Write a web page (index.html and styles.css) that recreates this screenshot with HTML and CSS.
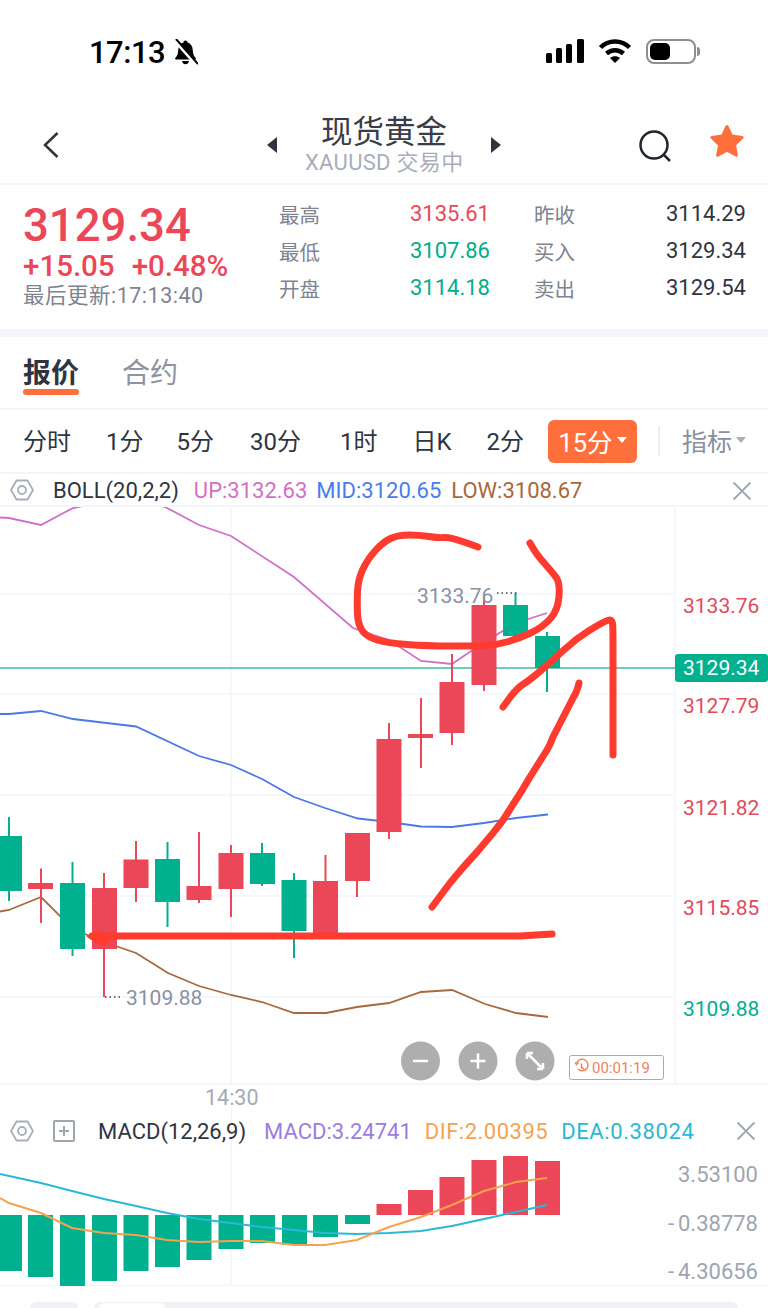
FILE: index.html
```html
<!DOCTYPE html>
<html lang="zh-CN">
<head>
    <meta charset="UTF-8">
    <meta name="viewport" content="width=device-width, initial-scale=1.0">
    <title>现货黄金</title>
    <link rel="stylesheet" href="styles.css">
</head>
<body>
    <div class="app">
        <!-- status bar -->
        <div class="status-bar">
            <div class="status-left">
                <span class="clock">17:13</span>
                <svg class="bell" viewBox="0 0 25 26">
                    <path class="ink" d="M12.5 1.5c1.2 0 2 .8 2 1.9 3.4 1 5 3.7 5.2 7.4.2 3.6.8 6 3 8.2.5.6.2 1.5-.7 1.5H3c-.9 0-1.200-.9-.7-1.500 2.200-2.200 2.800-4.600 3-8.200.2-3.700 1.800-6.400 5.200-7.400 0-1.100.8-1.900 2-1.900z"/>
                    <path class="ink" d="M9 22h7c-.3 2-1.700 3.300-3.500 3.300S9.300 24 9 22z"/>
                    <path class="bell-gap" d="M1 0l23 26"/>
                    <path class="bell-slash" d="M3 0l22 25"/>
                </svg>
            </div>
            <div class="status-right">
                <svg class="signal" viewBox="0 0 38 24">
                    <rect class="ink" x="0" y="14" width="6" height="10" rx="1.500"/>
                    <rect class="ink" x="10" y="9" width="6" height="15" rx="1.500"/>
                    <rect class="ink" x="20" y="5" width="6" height="19" rx="1.500"/>
                    <rect class="ink" x="31" y="0" width="7" height="24" rx="1.500"/>
                </svg>
                <svg class="wifi" viewBox="0 0 34 24">
                    <path class="wifi-arc" d="M2.500 8.500C10.500 .5 23.500 .5 31.500 8.500"/>
                    <path class="wifi-arc" d="M8.500 14.500C13.500 10 20.500 10 25.500 14.500"/>
                    <path class="ink" d="M12 19l5 5 5-5c-2.800-2.400-7.200-2.400-10 0z"/>
                </svg>
                <div class="battery"><div class="battery-level"></div></div>
                <div class="battery-nub"></div>
            </div>
        </div>

        <!-- nav -->
        <div class="nav">
            <svg class="back" viewBox="0 0 16 26"><path d="M14.500 1L2 13l12.500 12"/></svg>
            <div class="nav-center">
                <span class="tri tri-left"></span>
                <div class="nav-title">
                    <div class="name">现货黄金</div>
                    <div class="sub">XAUUSD 交易中</div>
                </div>
                <span class="tri tri-right"></span>
            </div>
            <svg class="search" viewBox="0 0 32 32"><circle cx="15" cy="15" r="13.500"/><path d="M24.500 24.500L31 31"/></svg>
            <svg class="star" viewBox="0 0 36 35"><path d="M18 2.500l4.600 9.600 10.500 1.400-7.700 7.300 2 10.500L18 26.300 8.600 31.300l2-10.500-7.700-7.300 10.500-1.400z"/></svg>
        </div>

        <!-- quote -->
        <div class="quote">
            <div class="quote-main">
                <div class="last">3129.34</div>
                <div class="change"><span>+15.05</span><span>+0.48%</span></div>
                <div class="updated">最后更新:17:13:40</div>
            </div>
            <div class="stats">
                <span class="stat-label">最高</span><span class="stat-val red">3135.61</span>
                <span class="stat-label second">昨收</span><span class="stat-val">3114.29</span>
                <span class="stat-label">最低</span><span class="stat-val green">3107.86</span>
                <span class="stat-label second">买入</span><span class="stat-val">3129.34</span>
                <span class="stat-label">开盘</span><span class="stat-val green">3114.18</span>
                <span class="stat-label second">卖出</span><span class="stat-val">3129.54</span>
            </div>
        </div>
        <div class="band"></div>

        <!-- tabs -->
        <div class="tabs">
            <div class="tab active">报价</div>
            <div class="tab">合约</div>
        </div>

        <!-- periods -->
        <div class="periods">
            <span class="period p1">分时</span>
            <span class="period p2">1分</span>
            <span class="period p3">5分</span>
            <span class="period p4">30分</span>
            <span class="period p5">1时</span>
            <span class="period p6">日K</span>
            <span class="period p7">2分</span>
            <span class="period-active">15分<i class="caret caret-white"></i></span>
            <span class="divider"></span>
            <span class="indicator">指标<i class="caret caret-grey"></i></span>
        </div>

        <!-- boll header -->
        <div class="ind-head boll-head">
            <svg class="hex" viewBox="0 0 24 22"><path d="M6.500 1.500h11L23 11l-5.500 9.500h-11L1 11z"/><circle cx="12" cy="11" r="4"/></svg>
            <span class="ind-name boll-name">BOLL(20,2,2)</span>
            <span class="c-up">UP:3132.63</span>
            <span class="c-mid">MID:3120.65</span>
            <span class="c-low">LOW:3108.67</span>
            <svg class="close" viewBox="0 0 20 20"><path d="M1.500 1.500l17 17M18.500 1.500l-17 17"/></svg>
        </div>

        <!-- main chart, drawn in page coordinates -->
        <svg class="chart" viewBox="0 507 768 578">
            <g class="grid">
                <path d="M0 594H675M0 694H675M0 795H675M0 896H675M0 997H675M0 1084H768"/>
                <path d="M231 507V1084M675 507V1084"/>
            </g>
            <path class="price-line" d="M0 668H675"/>

            <polyline class="l-up" points="0,517.500 9,518 41,525 73,508 88,505 160,505 167,508 199,525 231,536 294,577 353,628 389,640 421,661 452,664 483,643 516,623 547,613"/>
            <polyline class="l-mid" points="0,714 9,714 41,711 73,719 136,726.500 199,756 231,765 262,779 294,797 325,808 358,818.500 389,822 421,826.500 452,827 484,823 516,818 548,814.500"/>
            <polyline class="l-low" points="0,911.500 9,910 41,897 73,929 104,942 136,953 168,973 199,986 231,995 262,1002 294,1013 326,1013 357,1007 389,1003 421,992 452,990 485,1004 516,1013 548,1017"/>

            <g class="candle-up">
                <path class="wick" d="M41 868.500V923M104 873V997M136 841V902M199 832V903M231 845V917M325.500 855V935M357 881V897M389 723V839M421 698V768M452 654V745M484 597V691"/>
                <rect x="28" y="883" width="25" height="6"/>
                <rect x="92" y="888" width="25" height="61"/>
                <rect x="123.500" y="859.500" width="25" height="28.500"/>
                <rect x="186.500" y="886" width="25" height="14"/>
                <rect x="218.500" y="853" width="25" height="36"/>
                <rect x="313" y="881" width="25" height="56"/>
                <rect x="345" y="833" width="25" height="48"/>
                <rect x="376.500" y="739" width="25" height="93"/>
                <rect x="408" y="734" width="25" height="4"/>
                <rect x="439.500" y="682" width="25" height="51"/>
                <rect x="471.500" y="605" width="25" height="80"/>
            </g>
            <g class="candle-down">
                <path class="wick" d="M9 817V901M72.500 862V956M167.500 842V927M262 843V886M294 873V958M515.500 593V636M547 632V692"/>
                <rect x="-3" y="836" width="25" height="55"/>
                <rect x="60" y="883" width="25" height="66"/>
                <rect x="155" y="859" width="25" height="43"/>
                <rect x="250" y="853" width="25" height="31"/>
                <rect x="281.500" y="880" width="25" height="51"/>
                <rect x="503" y="605" width="25" height="31"/>
                <rect x="535" y="636" width="25" height="32"/>
            </g>

            <text class="mark" x="417" y="602.500">3133.76</text>
            <path class="dots" d="M497 593H517"/>
            <text class="mark" x="126" y="1005">3109.88</text>
            <path class="dots" d="M105 997H123"/>

            <text class="axis red-fill" x="683" y="613">3133.76</text>
            <rect class="price-tag" x="675" y="654" width="93" height="28" rx="3"/>
            <text class="axis tag-text" x="683" y="675">3129.34</text>
            <text class="axis red-fill" x="683" y="713">3127.79</text>
            <text class="axis red-fill" x="683" y="815">3121.82</text>
            <text class="axis red-fill" x="683" y="915">3115.85</text>
            <text class="axis green-fill" x="683" y="1016">3109.88</text>

            <!-- hand drawn marks on the screenshot -->
            <g class="ink-red">
                <path d="M478 547L464 542Q450 537 444 537.500Q438 538 429 536.500Q420 535 409 535Q398 535 390.500 538.500Q383 542 375 551Q367 560 362.500 570Q358 580 357.500 591.500Q357 603 357.500 614Q358 625 362.500 631Q367 637 377 640Q387 643 407 644.500Q427 646 450 646Q473 646 485 645.500Q497 645 508.500 641.500Q520 638 531.500 632.500Q543 627 550.500 618.500Q558 610 559 596.500Q560 583 556.500 578Q553 573 545 564Q537 555 533.500 549L530 543"/>
                <path d="M503 707L510 697.500Q517 688 523.500 684Q530 680 541.500 670Q553 660 565 649Q577 638 590 630Q603 622 607.500 620.500Q612 619 612.500 623Q613 627 613 640L613 755"/>
                <path d="M579 683Q577 692 573 698L553 737Q550 745 547 750L530 777Q522 791 512 806Q504 820 493 833L477 852Q463 867 450 883L432 907"/>
                <path d="M92 936H520L552 934"/>
                <path class="ink-blob" d="M87 936L100 931 110 938 106 945 98 944z"/>
            </g>

            <g class="zoom-btn">
                <circle cx="420.500" cy="1061" r="19.500"/>
                <circle cx="478" cy="1061" r="19.500"/>
                <circle cx="535" cy="1061" r="19.500"/>
                <path class="zoom-glyph" d="M413 1061H428M470.500 1061H485.500M478 1053.500V1068.500"/>
                <path class="zoom-glyph" d="M527 1053L543 1069M527 1053H533M527 1053V1059M543 1069H537M543 1069V1063"/>
            </g>

            <rect class="timer-box" x="569.500" y="1055.500" width="94" height="24" rx="2"/>
            <g class="timer-icon">
                <path d="M576.500 1064a5.800 5.800 0 1 1 1.500 5"/>
                <path d="M581.500 1063.500v4l2.500 1.500M575 1062.500l1.500 2 2-1.500"/>
            </g>
            <text class="timer-text" x="592" y="1073">00:01:19</text>
        </svg>

        <div class="time-axis"><span>14:30</span></div>

        <!-- macd header -->
        <div class="ind-head macd-head">
            <svg class="hex" viewBox="0 0 24 22"><path d="M6.500 1.500h11L23 11l-5.500 9.500h-11L1 11z"/><circle cx="12" cy="11" r="4"/></svg>
            <svg class="plus-box" viewBox="0 0 22 22"><rect x="1" y="1" width="20" height="20" rx="1"/><path d="M11 6v10M6 11h10"/></svg>
            <span class="ind-name macd-name">MACD(12,26,9)</span>
            <span class="c-macd">MACD:3.24741</span>
            <span class="c-dif">DIF:2.00395</span>
            <span class="c-dea">DEA:0.38024</span>
            <svg class="close macd-close" viewBox="0 0 20 20"><path d="M1.500 1.500l17 17M18.500 1.500l-17 17"/></svg>
        </div>

        <!-- macd chart -->
        <svg class="macd" viewBox="0 1150 768 136">
            <g class="grid">
                <path d="M231 1150V1285M0 1285.500H768"/>
            </g>
            <g class="bar-down">
                <rect x="-3" y="1215" width="25" height="56"/>
                <rect x="28" y="1215" width="25" height="62"/>
                <rect x="60" y="1215" width="25" height="72"/>
                <rect x="92" y="1215" width="25" height="66"/>
                <rect x="123.500" y="1215" width="25" height="56"/>
                <rect x="155" y="1215" width="25" height="52"/>
                <rect x="186.500" y="1215" width="25" height="45"/>
                <rect x="218.500" y="1215" width="25" height="34"/>
                <rect x="250" y="1215" width="25" height="28"/>
                <rect x="282" y="1215" width="25" height="30"/>
                <rect x="313" y="1215" width="25" height="22"/>
                <rect x="345" y="1215" width="25" height="9"/>
            </g>
            <g class="bar-up">
                <rect x="376.500" y="1204" width="25" height="11"/>
                <rect x="408" y="1190" width="25" height="25"/>
                <rect x="439.500" y="1177" width="25" height="38"/>
                <rect x="471.500" y="1160" width="25" height="55"/>
                <rect x="503" y="1156" width="25" height="59"/>
                <rect x="535" y="1161" width="25" height="54"/>
            </g>
            <polyline class="l-dea" points="0,1174 41,1183 72,1191 104,1199 136,1206 167,1213 199,1219 231,1223 262,1227 294,1230 325,1233 357,1234 389,1233 421,1231 452,1226 484,1219 516,1212 547,1205"/>
            <polyline class="l-dif" points="0,1198 9,1203 41,1213 72,1228 104,1233 136,1235 167,1240 199,1242 231,1241 262,1241 294,1245 325,1245 357,1240 389,1227 421,1217 452,1205 484,1191 516,1182 547,1178"/>
            <text class="axis macd-axis" x="758" y="1182" text-anchor="end">3.53100</text>
            <text class="axis macd-axis" x="758" y="1231" text-anchor="end">-<tspan dx="4">0.38778</tspan></text>
            <text class="axis macd-axis" x="758" y="1279" text-anchor="end">-<tspan dx="4">4.30656</tspan></text>
        </svg>

        <!-- bottom bar just cut off by the screenshot -->
        <div class="bottom-peek">
            <div class="peek-small"></div>
            <div class="peek-wide"><div class="peek-on"></div></div>
        </div>
    </div>
</body>
</html>
```

FILE: styles.css
```css
* {
    box-sizing: border-box;
}

body {
    margin: 0;
    background-color: white;
    font-family: Roboto, "Noto Sans CJK SC", sans-serif;
    color: #30343f;
}

.app {
    width: 768px;
    height: 1308px;
    overflow: hidden;
}

svg {
    display: block;
    flex: none;
}

.ink { fill: #000; }

/* status bar */
.status-bar {
    height: 100px;
    display: flex;
    justify-content: space-between;
    padding-top: 38px;
    align-items: flex-start;
}

.status-left {
    display: flex;
    align-items: center;
    margin-left: 89px;
    gap: 8px;
    height: 28px;
}

.clock {
    font-size: 31px;
    font-weight: 500;
    color: #000;
    letter-spacing: -0.5px;
}

.bell { width: 25px; height: 26px; }
.bell-gap { stroke: #fff; stroke-width: 4; }
.bell-slash { stroke: #000; stroke-width: 2; }

.status-right {
    display: flex;
    align-items: center;
    margin-right: 68px;
    height: 26px;
}

.signal { width: 38px; height: 24px; margin-right: 14px; }
.wifi { width: 34px; height: 24px; margin-right: 14px; }
.wifi-arc { fill: none; stroke: #000; stroke-width: 4.500; }

.battery {
    width: 50px;
    height: 25px;
    border: 2px solid #8e8e93;
    border-radius: 8px;
    padding: 2px;
}

.battery-level {
    width: 20px;
    height: 17px;
    background-color: #000;
    border-radius: 5px;
}

.battery-nub {
    width: 3px;
    height: 9px;
    margin-left: 1px;
    background-color: #8e8e93;
    border-radius: 0 3px 3px 0;
}

/* nav */
.nav {
    height: 85px;
    position: relative;
    display: flex;
    align-items: center;
    border-bottom: 2px solid #f4f5fa;
}

.back {
    width: 16px;
    height: 26px;
    margin-left: 43px;
    margin-top: 7px;
    fill: none;
    stroke: #30343f;
    stroke-width: 2.500;
}

.nav-center {
    display: flex;
    align-items: center;
    margin-left: 208px;
    gap: 28px;
}

.tri {
    width: 0;
    height: 0;
    margin-top: 7px;
    border-top: 8px solid transparent;
    border-bottom: 8px solid transparent;
}

.tri-left { border-right: 10px solid #30343f; }
.tri-right { border-left: 10px solid #30343f; }

.nav-title {
    width: 158px;
    text-align: center;
    margin-top: 3px;
}

.name {
    font-size: 31.500px;
    line-height: 40px;
    color: #3a3d47;
}

.sub {
    font-size: 22px;
    line-height: 20px;
    letter-spacing: 0.3px;
    color: #a9adbb;
    white-space: nowrap;
}

.search {
    width: 32px;
    height: 32px;
    margin-left: 138px;
    margin-top: 8px;
    fill: none;
    stroke: #22252c;
    stroke-width: 2.500;
}

.star {
    width: 36px;
    height: 35px;
    margin-left: 38px;
    fill: #ff6f3c;
    stroke: #ff6f3c;
    stroke-width: 3;
    stroke-linejoin: round;
}

/* quote */
.quote {
    height: 144px;
    display: flex;
    padding-left: 23px;
}

.quote-main {
    width: 256px;
}

.last {
    font-size: 45.500px;
    font-weight: 500;
    line-height: 48px;
    margin-top: 17px;
    color: #ec4758;
}

.change {
    display: flex;
    gap: 17px;
    font-size: 29.500px;
    font-weight: 500;
    line-height: 32px;
    color: #ec4758;
}

.updated {
    font-size: 21.500px;
    line-height: 28px;
    letter-spacing: 0.5px;
    color: #80848f;
    white-space: nowrap;
}

.stats {
    display: grid;
    grid-template-columns: 130px 81px 86px 170px;
    grid-auto-rows: 37px;
    align-items: center;
    margin-top: 10px;
}

.stat-label {
    font-size: 20.500px;
    color: #7e8391;
}

.stat-label.second {
    padding-left: 44px;
}

.stat-val {
    font-size: 22px;
    text-align: right;
    color: #30343f;
}

.stat-val.red { color: #ec4758; }
.stat-val.green { color: #00ad8c; }

.band {
    height: 8px;
    background-color: #f4f5fa;
}

/* tabs */
.tabs {
    height: 73px;
    display: flex;
    gap: 43px;
    padding-left: 23px;
    border-bottom: 2px solid #f4f5fa;
}

.tab {
    position: relative;
    font-size: 28px;
    line-height: 74px;
    color: #8d93a2;
}

.tab.active {
    color: #30343f;
    font-weight: 700;
}

.tab.active::after {
    content: "";
    position: absolute;
    left: 0;
    right: 0;
    top: 52px;
    height: 6px;
    border-radius: 3px;
    background-color: #ff6f3c;
}

/* periods */
.periods {
    height: 62px;
    display: flex;
    align-items: center;
    font-size: 24px;
    color: #30343f;
}

.period { flex: none; margin-bottom: 3px; }
.p1 { margin-left: 23px; }
.p2 { margin-left: 35px; }
.p3 { margin-left: 33px; }
.p4 { margin-left: 36px; }
.p5 { margin-left: 39px; }
.p6 { margin-left: 35px; }
.p7 { margin-left: 35px; }

.period-active {
    display: flex;
    align-items: center;
    justify-content: center;
    width: 89px;
    height: 43px;
    padding-bottom: 3px;
    margin-left: 24px;
    margin-top: 1px;
    border-radius: 6px;
    background-color: #ff6f3c;
    color: white;
    font-size: 25.500px;
}

.caret {
    display: inline-block;
    width: 0;
    height: 0;
    margin-left: 4px;
    border-left: 5px solid transparent;
    border-right: 5px solid transparent;
}

.caret-white { border-top: 6px solid white; }
.caret-grey { border-top: 6px solid #a8adba; }

.divider {
    width: 2px;
    height: 30px;
    margin-left: 21px;
    background-color: #eceef3;
}

.indicator {
    display: flex;
    align-items: center;
    margin-left: 22px;
    margin-bottom: 3px;
    color: #888f9e;
    font-size: 25px;
}

/* indicator headers */
.ind-head {
    display: flex;
    align-items: center;
    font-size: 22px;
    white-space: nowrap;
    position: relative;
}

.boll-head {
    height: 35px;
    padding-top: 1px;
    border-top: 2px solid #f4f5fa;
    border-bottom: 2px solid #f4f5fa;
}

.macd-head {
    height: 40px;
    padding-top: 2px;
    background: linear-gradient(#f4f5fa, #f4f5fa) 231px 0 / 1px 100% no-repeat;
}

.hex {
    width: 24px;
    height: 22px;
    margin-left: 10px;
    fill: none;
    stroke: #a8adba;
    stroke-width: 1.800;
}

.plus-box {
    width: 22px;
    height: 22px;
    margin-left: 19px;
    fill: none;
    stroke: #a0a5b3;
    stroke-width: 2;
}

.ind-name { color: #30343f; }
.boll-name { margin-left: 19px; margin-right: 15px; }
.macd-name { margin-left: 23px; margin-right: 18px; }

.c-up { color: #d56fc4; margin-right: 9px; }
.c-mid { color: #4a7cf0; margin-right: 10px; }
.c-low { color: #a8683c; }
.c-macd { color: #9d7ce0; margin-right: 13px; }
.c-dif { color: #f6a24f; margin-right: 13px; letter-spacing: 0.5px; }
.c-dea { color: #2bb8d6; letter-spacing: 0.6px; }

.close {
    position: absolute;
    right: 16px;
    top: 7px;
    width: 20px;
    height: 20px;
    fill: none;
    stroke: #a0a5b3;
    stroke-width: 1.800;
}

.macd-close {
    top: 11px;
    right: 12px;
}

/* main chart */
.chart {
    width: 768px;
    height: 578px;
}

.grid path {
    fill: none;
    stroke: #f4f5fa;
    stroke-width: 1.500;
}

.price-line {
    stroke: #3dbda3;
    stroke-width: 1.500;
}

.l-up, .l-mid, .l-low, .l-dif, .l-dea {
    fill: none;
    stroke-width: 1.800;
}

.l-up { stroke: #d070c8; }
.l-mid { stroke: #4a78e8; }
.l-low { stroke: #a8683c; }
.l-dif { stroke: #f6a24f; stroke-width: 2; }
.l-dea { stroke: #2bb8d6; stroke-width: 2; }

.candle-up, .bar-up { fill: #ec4758; }
.candle-down, .bar-down { fill: #00b08f; }

.wick { fill: none; stroke-width: 2; }
.candle-up .wick { stroke: #ec4758; }
.candle-down .wick { stroke: #00b08f; }

.mark {
    font-size: 21px;
    fill: #8a90a3;
}

.dots {
    stroke: #444;
    stroke-width: 1.500;
    stroke-dasharray: 1.500 3;
}

.axis { font-size: 21px; }
.red-fill { fill: #e24a5a; }
.green-fill { fill: #00ad8c; }
.macd-axis { fill: #a0a4b0; font-size: 22px; }
.tag-text { fill: white; }
.price-tag { fill: #00b08f; }

.ink-red path {
    fill: none;
    stroke: #ff3b30;
    stroke-width: 7;
    stroke-linecap: round;
    stroke-linejoin: round;
}

.ink-red .ink-blob {
    fill: #ff3b30;
    stroke-width: 1;
}

.zoom-btn circle { fill: #aeaeae; }

.zoom-glyph {
    fill: none;
    stroke: white;
    stroke-width: 2.500;
}

.timer-box {
    fill: white;
    stroke: #f0926c;
    stroke-width: 1;
}

.timer-icon path {
    fill: none;
    stroke: #f0825a;
    stroke-width: 1.500;
}

.timer-text {
    font-size: 15px;
    fill: #f0825a;
}

.time-axis {
    height: 25px;
    padding-left: 205px;
    font-size: 21.500px;
    line-height: 26px;
    color: #a6aab6;
    background: linear-gradient(#f4f5fa, #f4f5fa) 231px 23px / 1px 2px no-repeat;
}

/* macd chart */
.macd {
    width: 768px;
    height: 136px;
}

.bottom-peek {
    display: flex;
    gap: 16px;
    padding: 16px 30px 0;
}

.peek-small {
    width: 48px;
    height: 20px;
    border-radius: 6px;
    background-color: #f0f1f5;
}

.peek-wide {
    width: 645px;
    height: 20px;
    padding: 1px 4px;
    border-radius: 6px;
    background-color: #f0f1f5;
}

.peek-on {
    width: 68px;
    height: 20px;
    border-radius: 6px;
    background-color: white;
}
```
